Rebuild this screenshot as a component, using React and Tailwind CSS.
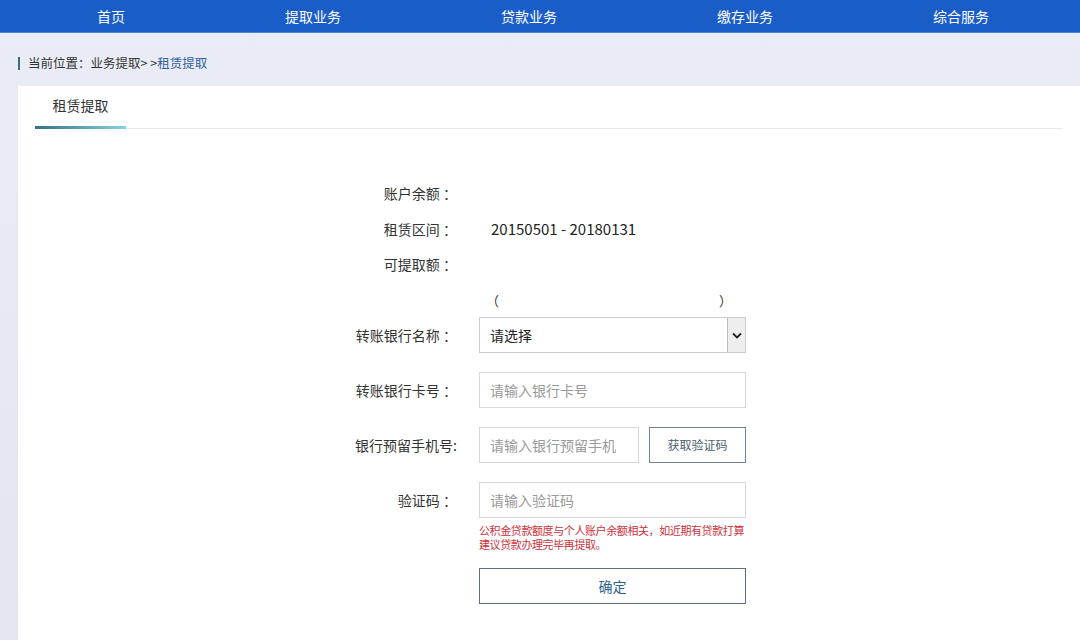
import React from 'react';

const navItems = ['首页', '提取业务', '贷款业务', '缴存业务', '综合服务'];

const font = { fontFamily: '"Microsoft YaHei", "Noto Sans CJK SC", sans-serif' };

const InfoRow = ({ label, children }) => (
  <div className="flex items-center h-[35.5px]">
    <div className="w-[122px] text-right text-[14px] text-[#333]">{label}</div>
    <div className="ml-[34px] text-[14px] text-[#222]">{children}</div>
  </div>
);

const FieldRow = ({ label, children, className = '' }) => (
  <div className={`flex items-start ${className}`}>
    <div className="w-[122px] h-[36px] flex items-center justify-end text-[14px] text-[#333]">{label}</div>
    <div className="ml-[22px]">{children}</div>
  </div>
);

const TextInput = ({ placeholder, width = 'w-[267px]' }) => (
  <input
    placeholder={placeholder}
    className={`${width} h-[36px] border border-[#d4d7dc] px-[10px] text-[14px] text-[#333] placeholder:text-[#9a9a9a] outline-none bg-white`}
    style={font}
  />
);

export default function App() {
  return (
    <div className="w-[1080px] h-[640px] overflow-hidden bg-gradient-to-b from-[#eaedf6] to-[#e4e6ee]" style={font}>
      {/* nav */}
      <nav className="h-[33px] bg-[#1b5dc7] border-b border-[#4a84d8] flex -ml-[11px]">
        {navItems.map((item, i) => (
          <div key={item} className={`w-[216px] flex items-center justify-center text-white text-[14px] ${i === 0 ? 'pl-[28px]' : ''}`}>
            {item}
          </div>
        ))}
      </nav>

      {/* breadcrumb */}
      <div className="h-[53px] flex items-center pl-[18px] pt-[8px] text-[12.5px]">
        <span className="w-[2px] h-[13px] bg-[#3b6a78] mr-[8px]" />
        <span className="text-[#333]">当前位置：业务提取&gt; &gt;</span>
        <span className="text-[#2f5f9e]">租赁提取</span>
      </div>

      {/* card */}
      <div className="ml-[18px] bg-white h-[560px]">
        <div className="mx-[17px] border-b border-[#e6e8ec] flex">
          <div className="relative w-[91px] h-[42px] pt-[9px] flex items-start justify-center text-[14px] text-[#333]">
            租赁提取
            <span className="absolute left-0 right-0 -bottom-[1px] h-[3px] bg-gradient-to-r from-[#35718a] to-[#86d3e0]" />
          </div>
        </div>

        <div className="ml-[317px] pt-[47px]">
          <InfoRow label="账户余额 ：" />
          <InfoRow label="租赁区间 ：">
            <span className="text-[15px]">20150501 - 20180131</span>
          </InfoRow>
          <InfoRow label="可提取额 ：" />
          <div className="flex items-center h-[35.5px] ml-[160px] text-[13px] text-[#333]">
            <span className="ml-[-9px]">（</span>
            <span className="ml-[220px]">）</span>
          </div>

          <FieldRow label="转账银行名称 ：" className="-mt-[1px]">
            <div className="w-[267px] h-[36px] border border-[#c9ccd2] flex items-center bg-white">
              <span className="flex-1 pl-[10px] text-[14px] text-[#222]">请选择</span>
              <span className="w-[18px] h-full border-l border-[#b9bcc2] bg-[#eeeeee] flex items-center justify-center">
                <svg width="10" height="7" viewBox="0 0 10 7" fill="none" stroke="#222" strokeWidth="1.8">
                  <path d="M1 1.5 L5 5.5 L9 1.5" />
                </svg>
              </span>
            </div>
          </FieldRow>

          <FieldRow label="转账银行卡号 ：" className="mt-[19px]">
            <TextInput placeholder="请输入银行卡号" />
          </FieldRow>

          <FieldRow label="银行预留手机号:" className="mt-[19px]">
            <div className="flex gap-[10px]">
              <TextInput placeholder="请输入银行预留手机" width="w-[160px]" />
              <button className="w-[97px] h-[36px] border border-[#6d8596] text-[12px] text-[#4a6070] bg-white">
                获取验证码
              </button>
            </div>
          </FieldRow>

          <FieldRow label="验证码 ：" className="mt-[19px]">
            <TextInput placeholder="请输入验证码" />
            <p className="mt-[5px] text-[11px] leading-[14px] tracking-[-0.4px] text-[#cc3039]">
              <span className="block whitespace-nowrap">公积金贷款额度与个人账户余额相关，如近期有贷款打算</span>
              <span className="block whitespace-nowrap">建议贷款办理完毕再提取。</span>
            </p>
          </FieldRow>

          <FieldRow label="" className="mt-[17px]">
            <button className="w-[267px] h-[36px] border border-[#5a6f82] text-[14px] text-[#2f5f8e] bg-white">
              确定
            </button>
          </FieldRow>
        </div>
      </div>
    </div>
  );
}
